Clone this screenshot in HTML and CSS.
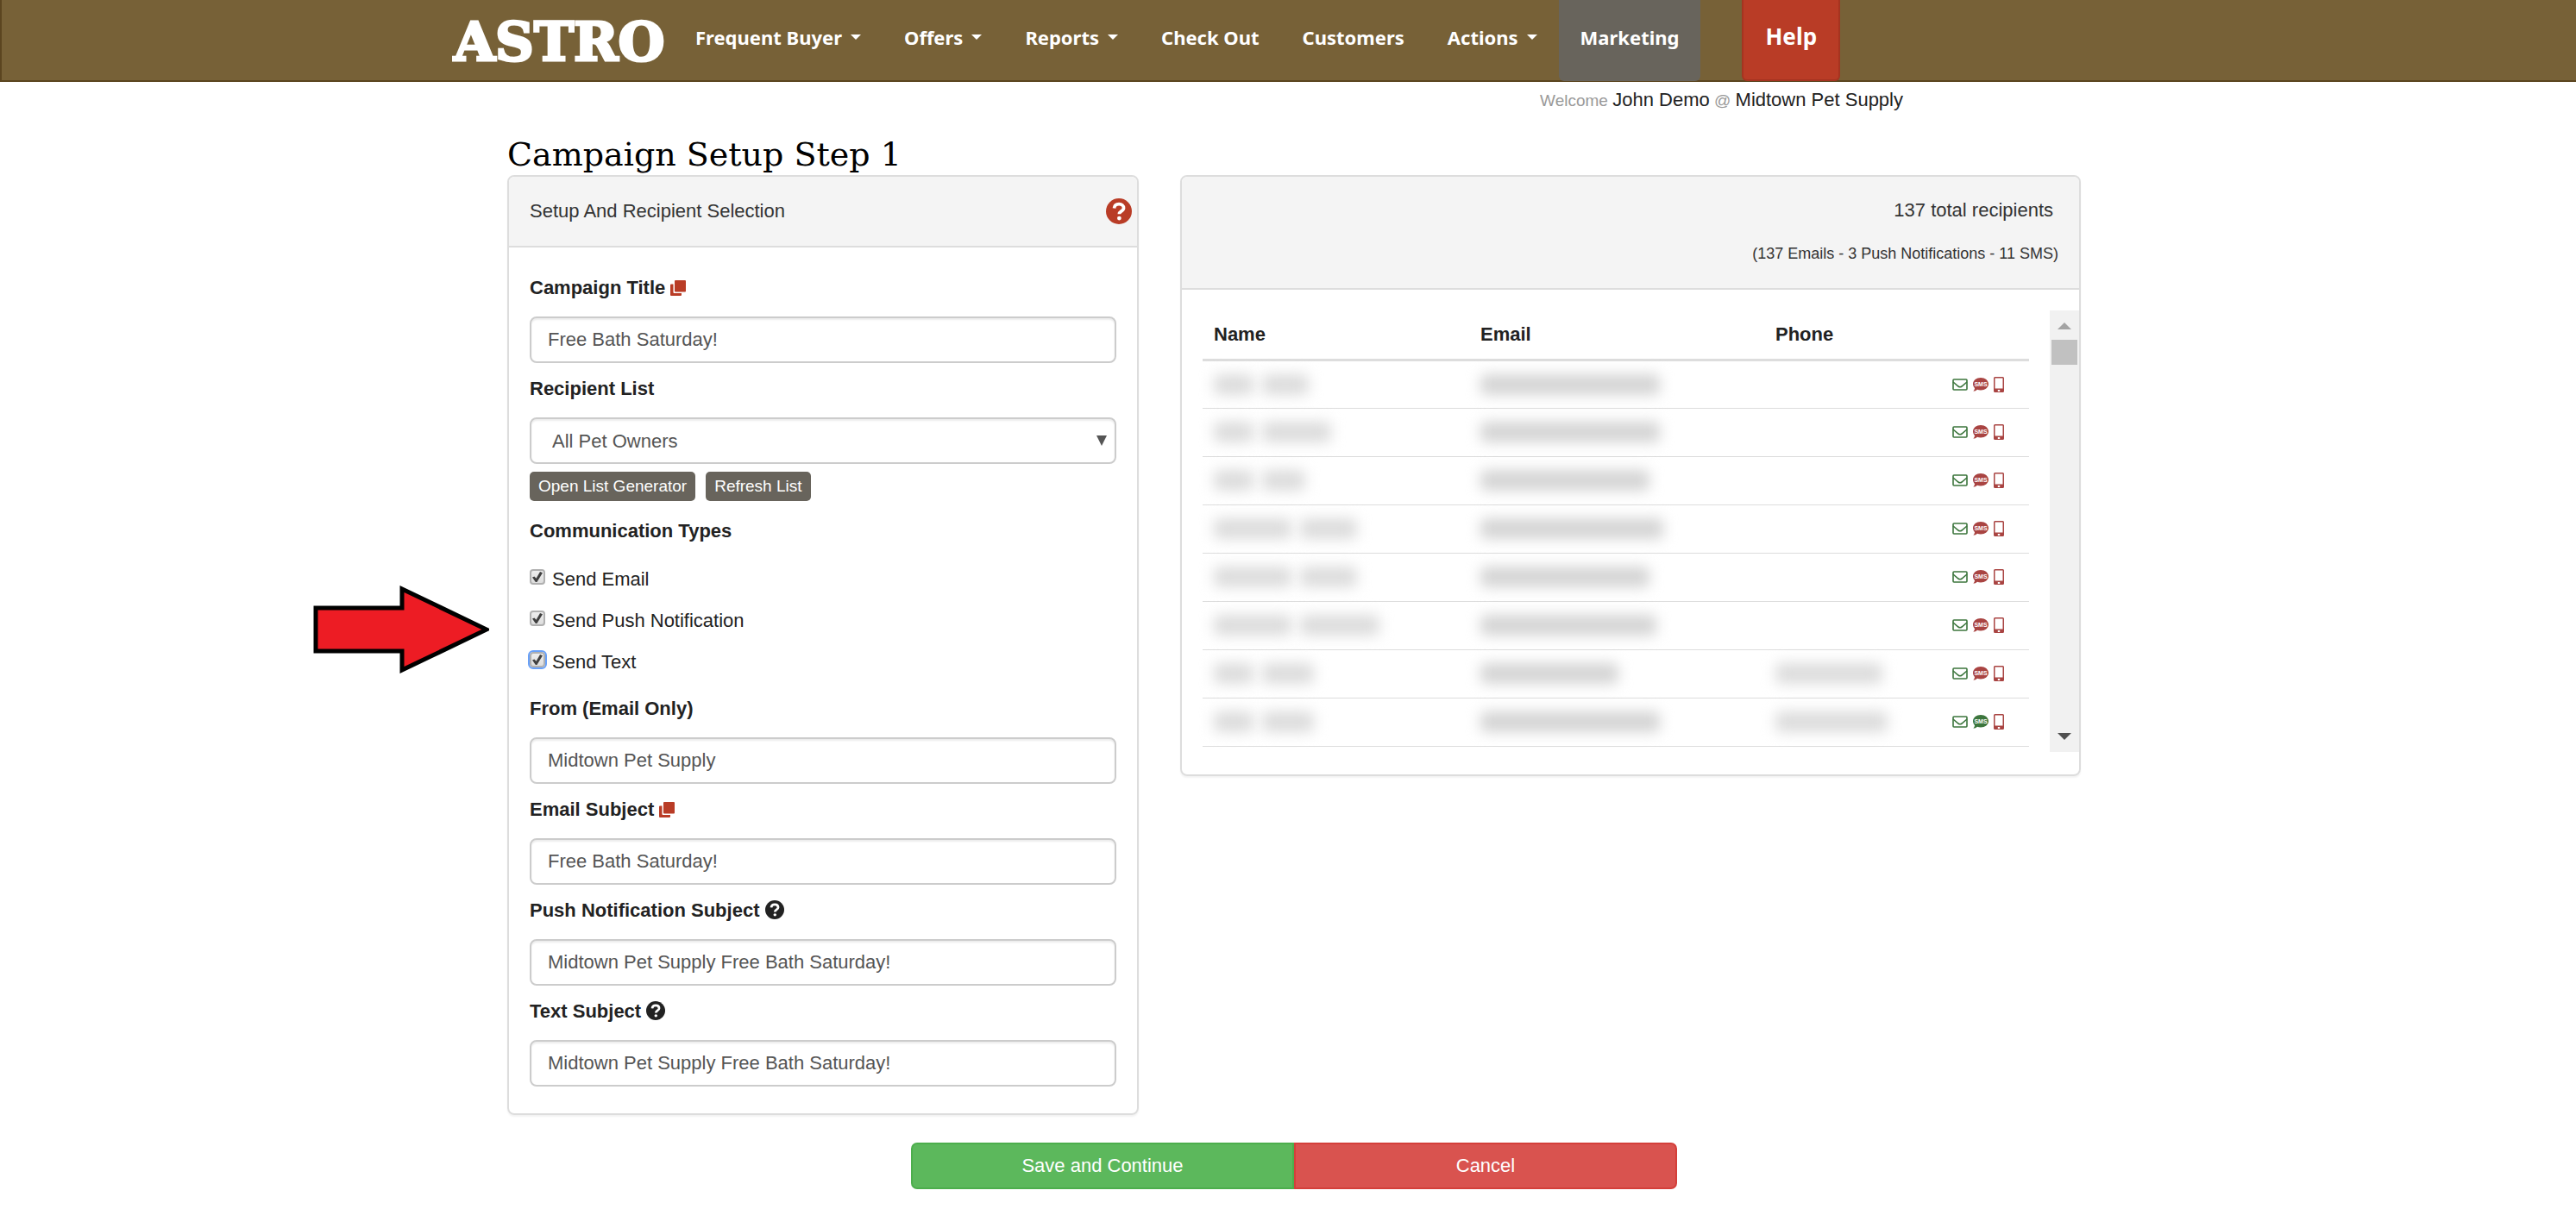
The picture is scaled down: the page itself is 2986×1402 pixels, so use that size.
FILE: index.html
```html
<!DOCTYPE html>
<html lang="en">
<head>
  <meta charset="UTF-8">
  <title>Campaign Setup</title>
  <meta name="viewport" content="width=device-width, initial-scale=1.0">
  <link rel="stylesheet" href="styles.css">
</head>
<body>

  <!-- Icon sprites -->
  <svg class="sprites" aria-hidden="true">
    <symbol id="i-help" viewBox="0 0 24 24">
      <circle cx="12" cy="12" r="12" fill="currentColor"/>
      <path d="M7.600 9.200C7.800 6.400 9.600 5.300 12.100 5.300C14.600 5.300 16.400 6.700 16.400 9C16.400 12 12.300 11.800 12.300 14.600" fill="none" stroke="#fff" stroke-width="3"/>
      <circle cx="12.300" cy="18.400" r="1.900" fill="#fff"/>
    </symbol>
    <symbol id="i-copy" viewBox="0 0 18 18">
      <rect x="5" y="0" width="13" height="13.500" rx="1" fill="currentColor"/>
      <path d="M0 5.500Q0 4.500 1 4.500H3.500V14Q3.500 15 4.500 15H13V17Q13 18 12 18H1Q0 18 0 17Z" fill="currentColor"/>
    </symbol>
    <symbol id="i-mail" viewBox="0 0 18 14">
      <rect x="1" y="1" width="16" height="12" rx="1" fill="none" stroke="currentColor" stroke-width="1.600"/>
      <path d="M1 4L7 9Q9 10.500 11 9L17 4" fill="none" stroke="currentColor" stroke-width="1.600"/>
    </symbol>
    <symbol id="i-sms" viewBox="0 0 18 16">
      <path d="M9 0C14 0 18 3.200 18 7.300S14 14.500 9 14.500C7.500 14.500 6.200 14.200 5 13.700C3.800 15 2 15.600 .3 15.600C1.500 14.500 2 13.300 2 12C.7 10.700 0 9.100 0 7.300C0 3.200 4 0 9 0Z" fill="currentColor"/>
      <text class="sms-text" x="9" y="10" text-anchor="middle">SMS</text>
    </symbol>
    <symbol id="i-phone" viewBox="0 0 12 18">
      <path fill-rule="evenodd" d="M1.500 0H10.500Q12 0 12 1.500V16.500Q12 18 10.500 18H1.500Q0 18 0 16.500V1.500Q0 0 1.500 0ZM1.500 1.500V13.500H10.500V1.500ZM4.800 15V17H7.200V15Z" fill="currentColor"/>
    </symbol>
  </svg>

  <header class="navbar">
    <div class="navbar-inner">
      <a class="logo" href="#">ASTRO</a>
      <nav>
        <a href="#">Frequent Buyer <i class="caret"></i></a>
        <a href="#">Offers <i class="caret"></i></a>
        <a href="#">Reports <i class="caret"></i></a>
        <a href="#">Check Out</a>
        <a href="#">Customers</a>
        <a href="#">Actions <i class="caret"></i></a>
        <a class="active" href="#">Marketing</a>
        <a class="help" href="#">Help</a>
      </nav>
    </div>
  </header>

  <p class="welcome">Welcome <a href="#">John Demo</a> @ <a href="#">Midtown Pet Supply</a></p>

  <main>
    <h1>Campaign Setup Step 1</h1>

    <form class="columns">
      <section class="panel">
        <div class="panel-heading setup-heading">
          <span>Setup And Recipient Selection</span>
          <a href="#" aria-label="Help"><svg class="icon-lg"><use href="#i-help"/></svg></a>
        </div>
        <div class="panel-body">
          <div class="form-group">
            <label for="title">Campaign Title <svg class="icon-copy"><use href="#i-copy"/></svg></label>
            <input class="form-control" type="text" id="title" value="Free Bath Saturday!">
          </div>

          <div class="form-group">
            <label for="list">Recipient List</label>
            <div class="select">
              <select class="form-control" id="list">
                <option>All Pet Owners</option>
              </select>
            </div>
            <div class="list-buttons">
              <button type="button">Open List Generator</button>
              <button type="button">Refresh List</button>
            </div>
          </div>

          <fieldset>
            <legend>Communication Types</legend>
            <label class="check"><input type="checkbox" checked> Send Email</label>
            <label class="check"><input type="checkbox" checked> Send Push Notification</label>
            <label class="check"><input class="focused" type="checkbox" checked> Send Text</label>
            <svg class="pointer" viewBox="0 0 204 102" aria-hidden="true">
              <path d="M3 26H103V4L201 51L103 98V76H3Z" fill="#ed1c24" stroke="#000" stroke-width="5"/>
            </svg>
          </fieldset>

          <div class="form-group">
            <label for="from">From (Email Only)</label>
            <input class="form-control" type="text" id="from" value="Midtown Pet Supply">
          </div>
          <div class="form-group">
            <label for="email-subject">Email Subject <svg class="icon-copy"><use href="#i-copy"/></svg></label>
            <input class="form-control" type="text" id="email-subject" value="Free Bath Saturday!">
          </div>
          <div class="form-group">
            <label for="push-subject">Push Notification Subject <svg class="icon-help"><use href="#i-help"/></svg></label>
            <input class="form-control" type="text" id="push-subject" value="Midtown Pet Supply Free Bath Saturday!">
          </div>
          <div class="form-group">
            <label for="text-subject">Text Subject <svg class="icon-help"><use href="#i-help"/></svg></label>
            <input class="form-control" type="text" id="text-subject" value="Midtown Pet Supply Free Bath Saturday!">
          </div>
        </div>
      </section>

      <section class="panel">
        <div class="panel-heading totals">
          <p>137 total recipients</p>
          <small>(137 Emails - 3 Push Notifications - 11 SMS)</small>
        </div>
        <div class="recipients">
          <div class="table-wrap">
            <table>
              <thead>
                <tr>
                  <th class="col-name">Name</th>
                  <th class="col-email">Email</th>
                  <th class="col-phone">Phone</th>
                  <th class="col-types"></th>
                </tr>
              </thead>
              <tbody id="rows"></tbody>
            </table>
          </div>
          <div class="scrollbar" aria-hidden="true">
            <i class="up"></i>
            <i class="thumb"></i>
            <i class="down"></i>
          </div>
        </div>
      </section>

      <div class="actions">
        <button class="save" type="submit">Save and Continue</button>
        <button class="cancel" type="button">Cancel</button>
      </div>
    </form>
  </main>

  <script>
    // Hidden contact details: text lengths in px, and whether SMS is enabled
    const recipients = [
      { name: [46, 54], email: 208, phone: 0, sms: false },
      { name: [46, 80], email: 208, phone: 0, sms: false },
      { name: [46, 50], email: 196, phone: 0, sms: false },
      { name: [90, 66], email: 212, phone: 0, sms: false },
      { name: [90, 66], email: 196, phone: 0, sms: false },
      { name: [90, 92], email: 204, phone: 0, sms: false },
      { name: [46, 60], email: 160, phone: 124, sms: false },
      { name: [46, 60], email: 208, phone: 130, sms: true }
    ];

    const smudge = w => w ? `<span class="smudge" style="width: ${w}px"></span>` : '';

    document.getElementById('rows').innerHTML = recipients.map(r => `
      <tr>
        <td>${r.name.map(smudge).join('<span class="space"></span>')}</td>
        <td class="dark">${smudge(r.email)}</td>
        <td>${smudge(r.phone)}</td>
        <td class="types">
          <svg class="icon-mail on"><use href="#i-mail"/></svg>
          <svg class="icon-sms ${r.sms ? 'on' : 'off'}"><use href="#i-sms"/></svg>
          <svg class="icon-phone off"><use href="#i-phone"/></svg>
        </td>
      </tr>`).join('');
  </script>

</body>
</html>
```

FILE: styles.css
```css
* {
  box-sizing: border-box;
}

body {
  margin: 0;
  background: #fff;
  color: #222;
  font-family: "Liberation Sans", Arial, sans-serif;
  font-size: 22px;
  line-height: 32px;
}

a {
  color: inherit;
  text-decoration: none;
}

.sprites {
  display: none;
}

/* Navbar */
.navbar {
  background: #776137;
  border-bottom: 2px solid #5b4520;
  border-left: 2px solid #5b4520;
}

.navbar-inner {
  display: flex;
  max-width: 1936px;
  height: 93px;
  margin: 0 auto;
}

.logo {
  width: 255px;
  color: #fff;
  font-family: "DejaVu Serif", serif;
  font-size: 62px;
  font-weight: bold;
  line-height: 98px;
  -webkit-text-stroke: 3px #fff;
}

nav {
  display: flex;
  color: #fff;
  font-family: "Noto Sans", sans-serif;
  font-weight: bold;
  white-space: nowrap;
}

nav a {
  display: flex;
  align-items: center;
  gap: 10px;
  padding: 0 25px 8px;
}

.caret {
  border: 6px solid transparent;
  border-top-color: #fff;
  border-bottom: 0;
}

nav .active {
  height: 94px;
  background: #68645c;
  border-radius: 0 0 6px 6px;
}

nav .help {
  height: 94px;
  margin-left: 48px;
  background: #b93c26;
  border: 2px solid #a53420;
  border-top: 0;
  border-radius: 0 0 6px 6px;
  font-size: 26px;
}

.welcome {
  max-width: 1426px;
  margin: 5px auto 0;
  color: #999;
  font-size: 19px;
  text-align: right;
}

.welcome a {
  color: #222;
  font-size: 22px;
}

/* Page */
main {
  max-width: 1838px;
  margin: 0 auto;
  padding-left: 14px;
}

h1 {
  margin: 24px 0 2px;
  color: #000;
  font-family: "DejaVu Serif", serif;
  font-size: 38px;
  font-weight: normal;
  line-height: 44px;
}

.columns {
  display: grid;
  grid-template-columns: 732fr 1044fr;
  gap: 32px 48px;
  align-items: start;
}

.panel {
  border: 2px solid #ddd;
  border-radius: 8px;
  box-shadow: 0 2px 2px rgba(0, 0, 0, 0.05);
}

.panel-heading {
  background: #f4f4f4;
  border-bottom: 2px solid #ddd;
  border-radius: 6px 6px 0 0;
  color: #333;
}

.setup-heading {
  display: flex;
  align-items: center;
  justify-content: space-between;
  height: 82px;
  padding: 0 6px 0 24px;
}

.icon-lg {
  display: block;
  width: 30px;
  height: 30px;
  color: #b93c26;
}

.panel-body {
  padding: 31px 24px;
}

/* Form */
.form-group {
  margin-bottom: 14px;
}

.form-group:last-child {
  margin-bottom: 0;
}

.form-group label,
legend {
  display: block;
  padding: 0;
  margin-bottom: 17px;
  font-weight: bold;
}

.form-control {
  display: block;
  width: 100%;
  height: 54px;
  padding: 0 19px;
  background: #fff;
  border: 2px solid #ccc;
  border-radius: 8px;
  box-shadow: inset 0 2px 2px rgba(0, 0, 0, 0.08);
  color: #555;
  font-family: inherit;
  font-size: 22px;
}

.select {
  position: relative;
}

.select::after {
  content: "";
  position: absolute;
  right: 11px;
  top: 21px;
  border: 6px solid transparent;
  border-top: 12px solid #555;
  border-bottom: 0;
  pointer-events: none;
}

select.form-control {
  padding: 0 24px;
  appearance: none;
}

.icon-copy {
  width: 18px;
  height: 18px;
  color: #b93c26;
  vertical-align: -2px;
}

.icon-help {
  width: 22px;
  height: 22px;
  vertical-align: -3px;
}

.list-buttons {
  display: flex;
  gap: 12px;
  margin-top: 9px;
}

.list-buttons button {
  height: 34px;
  padding: 0 10px;
  background: #68645c;
  border: 0;
  border-radius: 5px;
  color: #fff;
  font-family: inherit;
  font-size: 19px;
}

fieldset {
  position: relative;
  margin: 0 0 6px;
  padding: 0;
  border: 0;
}

legend {
  margin-bottom: 24px;
  padding-top: 5px;
}

.check {
  display: flex;
  align-items: center;
  gap: 8px;
  height: 32px;
  margin-bottom: 16px;
}

.check input {
  width: 18px;
  height: 18px;
  margin: 0 0 6px;
  appearance: none;
  background: linear-gradient(#eee, #ddd);
  border: 2px solid #b0b0b0;
  border-radius: 4px;
}

.check input:checked::before {
  content: "";
  display: block;
  width: 12px;
  height: 12px;
  margin: 1px;
  background: #404040;
  clip-path: polygon(0 55%, 20% 45%, 38% 65%, 75% 0, 100% 10%, 45% 100%, 32% 100%);
}

.check .focused {
  outline: 2px solid #68a0f8;
}

/* Arrow calling out the communication types */
.pointer {
  position: absolute;
  left: -251px;
  top: 23px;
  width: 204px;
  height: 102px;
}

/* Recipients */
.totals {
  height: 131px;
  padding: 23px 24px 0;
  text-align: right;
}

.totals p {
  margin: 0 6px 18px;
}

.totals small {
  display: block;
  font-size: 18px;
}

.recipients {
  display: flex;
  gap: 24px;
  padding: 24px 0 26px 24px;
}

.table-wrap {
  flex: 1;
}

table {
  width: 100%;
  border-collapse: collapse;
  table-layout: fixed;
}

.col-name {
  width: 309px;
}

.col-email {
  width: 342px;
}

.col-phone {
  width: 205px;
}

th {
  height: 57px;
  padding: 0 13px;
  border-bottom: 3px solid #ddd;
  text-align: left;
}

td {
  height: 56px;
  padding: 0 13px;
  border-bottom: 1px solid #ddd;
  line-height: 0;
  white-space: nowrap;
}

.smudge {
  display: inline-block;
  height: 24px;
  background: #dcdcdc;
  border-radius: 6px;
  filter: blur(8px);
}

.dark .smudge {
  background: #d4d4d4;
}

.space {
  display: inline-block;
  width: 10px;
}

.types svg {
  vertical-align: middle;
}

.icon-mail {
  width: 18px;
  height: 14px;
}

.icon-sms {
  width: 18px;
  height: 16px;
}

.icon-phone {
  width: 12px;
  height: 18px;
}

.sms-text {
  fill: #fff;
  font-family: "Liberation Sans", Arial, sans-serif;
  font-size: 7px;
  font-weight: bold;
}

.on {
  color: #3c763d;
}

.off {
  color: #a94442;
}

.scrollbar {
  display: flex;
  flex-direction: column;
  align-items: center;
  width: 34px;
  height: 512px;
  padding: 14px 0;
  background: #f1f1f1;
}

.up {
  border: 8px solid transparent;
  border-top: 0;
  border-bottom-color: #a3a3a3;
}

.thumb {
  width: 30px;
  height: 29px;
  margin-top: 12px;
  background: #c1c1c1;
}

.down {
  margin-top: auto;
  border: 8px solid transparent;
  border-top-color: #505050;
  border-bottom: 0;
}

/* Footer buttons */
.actions {
  grid-column: 1 / -1;
  display: flex;
  width: 100%;
  max-width: 888px;
  margin: 0 auto;
}

.actions button {
  flex: 1;
  height: 54px;
  color: #fff;
  font-family: inherit;
  font-size: 22px;
}

.save {
  background: #5cb85c;
  border: 2px solid #4cae4c;
  border-radius: 7px 0 0 7px;
}

.cancel {
  background: #d9534f;
  border: 2px solid #d43f3a;
  border-radius: 0 7px 7px 0;
}
```
